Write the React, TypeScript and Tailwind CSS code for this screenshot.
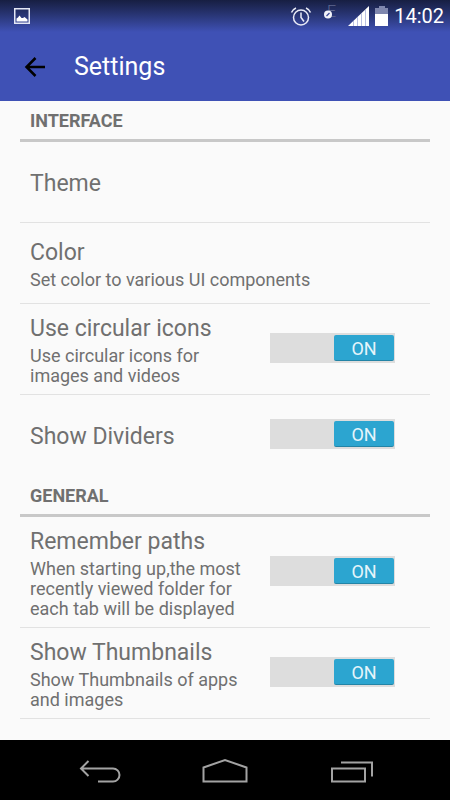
import React, { useState } from "react";

interface SettingItem {
  id: string;
  title: string;
  summary?: string;
  toggle?: boolean;
}

interface SettingSection {
  heading: string;
  items: SettingItem[];
}

const sections: SettingSection[] = [
  {
    heading: "INTERFACE",
    items: [
      { id: "theme", title: "Theme" },
      { id: "color", title: "Color", summary: "Set color to various UI components" },
      {
        id: "circular",
        title: "Use circular icons",
        summary: "Use circular icons for images and videos",
        toggle: true,
      },
      { id: "dividers", title: "Show Dividers", toggle: true },
    ],
  },
  {
    heading: "GENERAL",
    items: [
      {
        id: "paths",
        title: "Remember paths",
        summary: "When starting up,the most recently viewed folder for each tab will be displayed",
        toggle: true,
      },
      {
        id: "thumbnails",
        title: "Show Thumbnails",
        summary: "Show Thumbnails of apps and images",
        toggle: true,
      },
    ],
  },
];

const StatusBar = () => (
  <div className="flex h-8 items-center justify-between bg-gradient-to-b from-[#171f42] to-[#3f51b5] pl-3.5 pr-1.5 text-white">
    <svg width="16" height="16" viewBox="0 0 16 16" aria-hidden="true">
      <rect x="0.75" y="0.75" width="14.5" height="14.5" fill="none" stroke="#e4e7f5" strokeWidth="1.5" />
      <path d="M2.500 13.500V10.500l1.500-1 1.500-2 2 2.500 1.500 0 1.500-1 3 2.500v2z" fill="#fff" />
    </svg>
    <div className="flex items-center">
      <svg width="22" height="22" viewBox="0 0 22 22" fill="none" stroke="#e8eaf6" strokeWidth="1.5" aria-hidden="true">
        <circle cx="11" cy="12.500" r="7.5" />
        <path d="M11 7.500v5l3 4M1.500 7.500Q2.500 4.500 6 3M20.500 7.500Q19.500 4.500 16 3" />
      </svg>
      <div className="relative ml-3 h-5 w-3">
        <span className="absolute -top-0.5 right-0 text-base font-light leading-4 text-[#5f688f]">E</span>
        <svg className="absolute left-0 top-1" width="8" height="9" viewBox="0 0 8 9" aria-hidden="true">
          <circle cx="4" cy="4.500" r="4" fill="#f2f3fa" />
          <path d="M2.500 6l3-3" stroke="#3a4795" strokeWidth="1.200" />
        </svg>
      </div>
      <svg className="ml-3" width="21" height="20" viewBox="0 0 21 20" aria-hidden="true">
        <path d="M0 20L21 0v20z" fill="#fff" />
        <path d="M5.500 15v5M9.500 11v9M13.500 7v13M17.500 4v16" stroke="#b9c0e2" />
      </svg>
      <svg className="ml-1.5" width="13" height="20" viewBox="0 0 13 20" aria-hidden="true">
        <path d="M4 0h6v2h3v7H0V2h4z" fill="#7f87ae" />
        <path d="M0 8h13v12H0z" fill="#fff" />
      </svg>
      <span className="ml-1.5 text-[20px] leading-6">14:02</span>
    </div>
  </div>
);

const Toggle = ({ id, label }: { id: string; label: string }) => {
  const [on, setOn] = useState(true);

  return (
    <label
      className={`mb-0.5 flex h-[30px] w-[125px] shrink-0 cursor-pointer bg-[#dddddd] py-0.5 pl-0.5 pr-px ${
        on ? "justify-end" : "justify-start"
      }`}
    >
      <input
        id={id}
        type="checkbox"
        role="switch"
        aria-label={label}
        className="sr-only"
        checked={on}
        onChange={(e) => setOn(e.target.checked)}
      />
      <span
        className={`flex w-[60px] items-center justify-center rounded-[2px] border-b border-black/20 pt-0.5 text-[18px] leading-5 text-[#e6f5fb] ${
          on ? "bg-[#2ca5d0]" : "bg-[#999999]"
        }`}
      >
        {on ? "ON" : "OFF"}
      </span>
    </label>
  );
};

const ItemText = ({ item }: { item: SettingItem }) => (
  <span className={`block min-w-0 flex-1 ${item.summary ? "" : "pt-1"}`}>
    <span className="block text-[23px] leading-[34px]">{item.title}</span>
    {item.summary && <span className="block text-[18px] leading-5">{item.summary}</span>}
  </span>
);

const SettingRow = ({ item }: { item: SettingItem }) => {
  const row = "flex min-h-20 w-full items-center py-2 pl-2.5 text-left";

  if (!item.toggle) {
    return (
      <button type="button" className={row}>
        <ItemText item={item} />
      </button>
    );
  }

  return (
    <div className={`${row} gap-7 pr-[35px]`}>
      <ItemText item={item} />
      <Toggle id={item.id} label={item.title} />
    </div>
  );
};

const NavBar = () => (
  <nav className="flex h-[60px] items-center justify-center gap-20 bg-black">
    <button type="button" aria-label="Back">
      <svg width="46" height="30" viewBox="0 0 46 30" fill="none" stroke="#a3a3a3" strokeWidth="2">
        <path d="M12.500 6L5 13.500l7.500 7.500M5 13.500h32a6.500 6.500 0 0 1 0 13H22" />
      </svg>
    </button>
    <button type="button" aria-label="Home">
      <svg width="46" height="30" viewBox="0 0 46 30" fill="none" stroke="#a3a3a3" strokeWidth="2">
        <path d="M1.500 26.500V12.500L23 5l21.500 7.500v14z" />
      </svg>
    </button>
    <button type="button" aria-label="Recent apps">
      <svg width="46" height="30" viewBox="0 0 46 30" fill="none" stroke="#a3a3a3" strokeWidth="2">
        <path d="M4 13.500h33v13H4zM13 7.500h31v14" />
      </svg>
    </button>
  </nav>
);

export default function App() {
  return (
    <div className="flex min-h-screen flex-col bg-[#fafafa] font-['Roboto',sans-serif] text-[#707070]">
      <header className="bg-[#3f51b5]">
        <StatusBar />
        <div className="flex h-[69px] items-center gap-7 pl-6 pt-px text-white">
          <button type="button" aria-label="Navigate up">
            <svg width="22" height="22" viewBox="0 0 22 22" fill="none" stroke="#000" strokeWidth="2.500">
              <path d="M21 11H3M11.500 2L2.500 11l9 9" />
            </svg>
          </button>
          <h1 className="text-[25px] leading-8">Settings</h1>
        </div>
      </header>

      <main className="flex-1 px-5">
        {sections.map((section, index) => (
          <section key={section.heading}>
            <h2 className="border-b-[3px] border-[#c8c8c8] pb-2 pl-2.5 pt-2.5 text-[18px] font-bold leading-5">
              {section.heading}
            </h2>
            <ul>
              {section.items.map((item, i) => (
                <li
                  key={item.id}
                  className={`border-b ${
                    // no rule between the last row and the next section heading
                    i === section.items.length - 1 && index < sections.length - 1
                      ? "border-transparent"
                      : "border-[#e2e2e2]"
                  }`}
                >
                  <SettingRow item={item} />
                </li>
              ))}
            </ul>
          </section>
        ))}
      </main>

      <NavBar />
    </div>
  );
}
